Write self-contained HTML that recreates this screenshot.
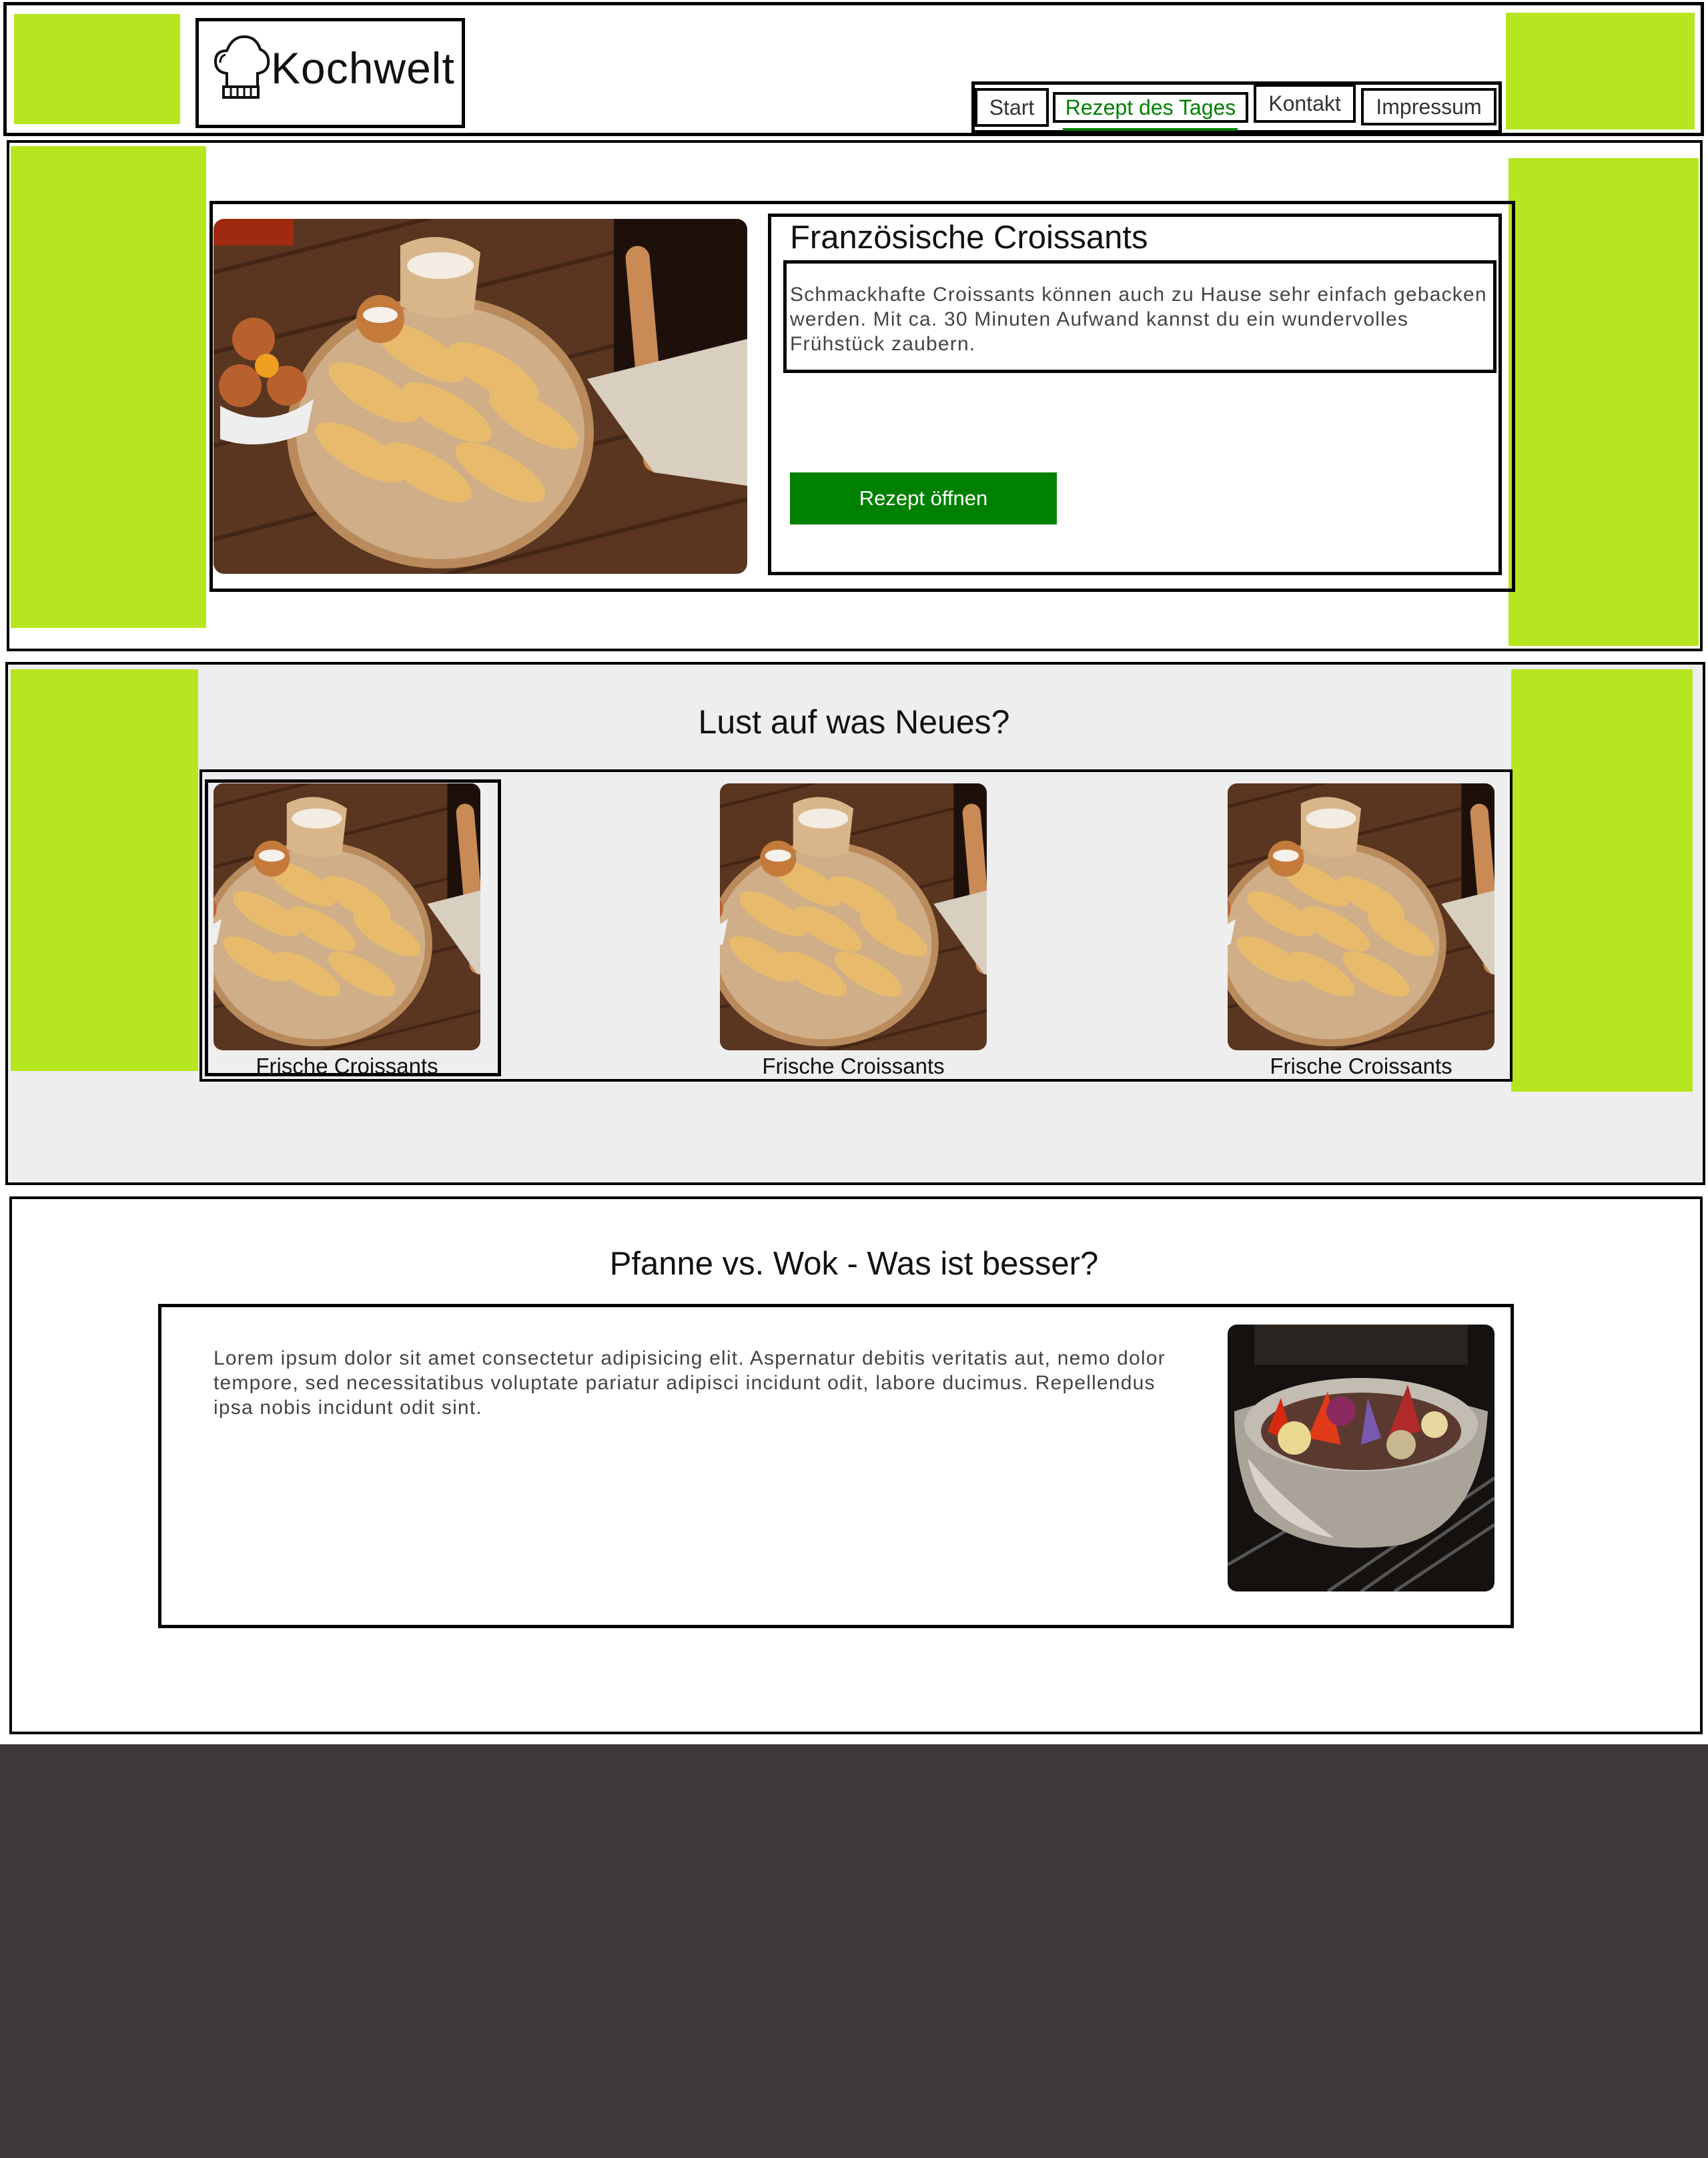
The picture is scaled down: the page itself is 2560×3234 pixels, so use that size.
<!DOCTYPE html>
<html><head><meta charset="utf-8">
<style>
*{margin:0;padding:0;box-sizing:border-box}
html,body{width:2560px;height:3234px;background:#fff;overflow:hidden}
body{position:relative;font-family:"Liberation Sans",sans-serif;color:#333}
.a{position:absolute}
.b{border:4px solid #000}
.g{background:#b6e61f}
.nav{font-size:32px;color:#333;text-align:center;line-height:46px}
</style></head><body>
<svg width="0" height="0" style="position:absolute">
<defs>
<symbol id="cro" viewBox="0 0 400 266" preserveAspectRatio="xMidYMid slice">
<rect width="400" height="266" fill="#5a3520"/>
<g stroke="#3a2012" stroke-width="3" opacity=".7">
<line x1="0" y1="40" x2="400" y2="-60"/><line x1="0" y1="100" x2="400" y2="0"/><line x1="0" y1="170" x2="400" y2="70"/><line x1="0" y1="240" x2="400" y2="140"/><line x1="0" y1="310" x2="400" y2="210"/></g>
<rect x="300" y="0" width="100" height="120" fill="#1d100a"/>
<rect x="315" y="20" width="18" height="170" rx="9" fill="#c98a56" transform="rotate(-5 324 100)"/>
<path d="M280 120 L400 90 L400 200 L330 190Z" fill="#d8cfc0"/>
<ellipse cx="170" cy="160" rx="115" ry="102" fill="#b98b5c"/>
<ellipse cx="170" cy="160" rx="108" ry="95" fill="#cfae88"/>
<g fill="#e8bb6c">
<ellipse cx="110" cy="175" rx="38" ry="14" transform="rotate(30 110 175)"/>
<ellipse cx="160" cy="190" rx="38" ry="14" transform="rotate(30 160 190)"/>
<ellipse cx="215" cy="190" rx="38" ry="14" transform="rotate(30 215 190)"/>
<ellipse cx="120" cy="130" rx="38" ry="14" transform="rotate(30 120 130)"/>
<ellipse cx="175" cy="145" rx="38" ry="14" transform="rotate(30 175 145)"/>
<ellipse cx="240" cy="150" rx="38" ry="14" transform="rotate(30 240 150)"/>
<ellipse cx="155" cy="100" rx="38" ry="14" transform="rotate(30 155 100)"/>
<ellipse cx="210" cy="115" rx="38" ry="14" transform="rotate(30 210 115)"/>
</g>
<path d="M140 20 Q170 5 200 25 L195 70 Q165 80 140 65Z" fill="#d9b68a"/>
<ellipse cx="170" cy="35" rx="25" ry="10" fill="#f2ece2"/>
<circle cx="125" cy="75" r="18" fill="#c47a3a"/><ellipse cx="125" cy="72" rx="13" ry="6" fill="#f5f0ea"/>
<circle cx="30" cy="90" r="16" fill="#b8602e"/><circle cx="20" cy="125" r="16" fill="#b8602e"/><circle cx="55" cy="125" r="15" fill="#b8602e"/>
<path d="M5 140 Q40 160 75 135 L70 160 Q35 175 5 165Z" fill="#eee"/>
<circle cx="40" cy="110" r="9" fill="#f0a020"/>
<rect x="0" y="0" width="60" height="20" fill="#a02a10"/>
</symbol>
</defs></svg>

<!-- header -->
<div class="a b" style="left:5px;top:3px;width:2549px;height:201px;border-width:5px"></div>
<div class="a g" style="left:21px;top:21px;width:249px;height:165px"></div>
<div class="a g" style="left:2257px;top:19px;width:283px;height:175px"></div>
<div class="a b" style="left:293px;top:27px;width:404px;height:165px;border-width:5px"></div>
<svg class="a" style="left:318px;top:50px" width="90" height="104" viewBox="0 0 90 104">
<path d="M22 78 L22 60 Q5 58 5 42 Q5 26 22 26 Q30 5 48 5 Q66 5 72 24 Q86 30 84 46 Q82 58 68 60 L68 78" fill="none" stroke="#111" stroke-width="4"/>
<path d="M12 44 Q12 34 20 32" fill="none" stroke="#111" stroke-width="3"/>
<rect x="17" y="80" width="52" height="16" fill="none" stroke="#111" stroke-width="4"/>
<path d="M28 82V94M38 82V94M48 82V94M58 82V94" stroke="#111" stroke-width="3"/>
</svg>
<div class="a" style="left:406px;top:64px;font-size:66px;color:#111;line-height:76px;letter-spacing:1px">Kochwelt</div>

<div class="a b" style="left:1456px;top:122px;width:795px;height:78px;border-width:5px"></div>
<div class="a b nav" style="left:1461px;top:132px;width:111px;height:58px;line-height:50px">Start</div>
<div class="a b nav" style="left:1578px;top:138px;width:293px;height:46px;line-height:38px;color:#008000">Rezept des Tages</div>
<div class="a" style="left:1593px;top:192px;width:262px;height:4px;background:#008000"></div>
<div class="a b nav" style="left:1879px;top:126px;width:153px;height:58px;line-height:50px">Kontakt</div>
<div class="a b nav" style="left:2040px;top:132px;width:203px;height:56px;line-height:48px">Impressum</div>

<!-- hero -->
<div class="a b" style="left:10px;top:210px;width:2542px;height:766px"></div>
<div class="a g" style="left:16px;top:219px;width:293px;height:722px"></div>
<div class="a g" style="left:2261px;top:237px;width:285px;height:731px"></div>
<div class="a b" style="left:314px;top:301px;width:1957px;height:586px;border-width:5px"></div>
<svg class="a" style="left:320px;top:328px;border-radius:16px" width="800" height="532"><use href="#cro" width="800" height="532"/></svg>
<div class="a b" style="left:1151px;top:320px;width:1100px;height:542px;border-width:5px"></div>
<div class="a" style="left:1184px;top:324px;font-size:49px;color:#111;line-height:64px">Französische Croissants</div>
<div class="a b" style="left:1174px;top:390px;width:1069px;height:169px;border-width:5px"></div>
<div class="a" style="left:1184px;top:423px;width:1060px;font-size:30px;line-height:37px;color:#444;letter-spacing:1.2px">Schmackhafte Croissants können auch zu Hause sehr einfach gebacken werden. Mit ca. 30 Minuten Aufwand kannst du ein wundervolles Frühstück zaubern.</div>
<div class="a" style="left:1184px;top:708px;width:400px;height:78px;background:#008000;color:#fff;font-size:31px;line-height:78px;text-align:center">Rezept öffnen</div>

<!-- section 3 -->
<div class="a b" style="left:8px;top:992px;width:2548px;height:784px;background:#eee"></div>
<div class="a g" style="left:16px;top:1003px;width:281px;height:602px"></div>
<div class="a g" style="left:2265px;top:1003px;width:272px;height:633px"></div>
<div class="a" style="left:0;top:1050px;width:2560px;text-align:center;font-size:50px;color:#111;line-height:64px">Lust auf was Neues?</div>
<div class="a b" style="left:299px;top:1153px;width:1968px;height:468px"></div>
<div class="a b" style="left:307px;top:1168px;width:444px;height:445px;border-width:5px"></div>
<svg class="a" style="left:320px;top:1174px;border-radius:14px" width="400" height="400"><use href="#cro" width="400" height="400"/></svg>
<svg class="a" style="left:1079px;top:1174px;border-radius:14px" width="400" height="400"><use href="#cro" width="400" height="400"/></svg>
<svg class="a" style="left:1840px;top:1174px;border-radius:14px" width="400" height="400"><use href="#cro" width="400" height="400"/></svg>
<div class="a" style="left:320px;top:1578px;width:400px;text-align:center;font-size:33px;color:#111;line-height:40px">Frische Croissants</div>
<div class="a" style="left:1079px;top:1578px;width:400px;text-align:center;font-size:33px;color:#111;line-height:40px">Frische Croissants</div>
<div class="a" style="left:1840px;top:1578px;width:400px;text-align:center;font-size:33px;color:#111;line-height:40px">Frische Croissants</div>

<!-- section 4 -->
<div class="a b" style="left:14px;top:1793px;width:2538px;height:806px"></div>
<div class="a" style="left:0;top:1862px;width:2560px;text-align:center;font-size:49px;color:#111;line-height:64px">Pfanne vs. Wok - Was ist besser?</div>
<div class="a b" style="left:237px;top:1954px;width:2032px;height:486px;border-width:5px"></div>
<div class="a" style="left:320px;top:2017px;width:1460px;font-size:30px;line-height:37px;color:#444;letter-spacing:1.2px">Lorem ipsum dolor sit amet consectetur adipisicing elit. Aspernatur debitis veritatis aut, nemo dolor tempore, sed necessitatibus voluptate pariatur adipisci incidunt odit, labore ducimus. Repellendus ipsa nobis incidunt odit sint.</div>
<svg class="a" style="left:1840px;top:1985px;border-radius:14px" width="400" height="400" viewBox="0 0 400 400">
<rect width="400" height="400" fill="#14110f"/>
<rect x="40" y="0" width="320" height="60" fill="#2a2420"/>
<g stroke="#555" stroke-width="5"><line x1="200" y1="400" x2="400" y2="260"/><line x1="150" y1="400" x2="400" y2="230"/><line x1="250" y1="400" x2="400" y2="300"/><line x1="0" y1="360" x2="120" y2="290"/></g>
<path d="M10 130 Q190 70 390 130 Q380 300 260 330 Q120 350 40 280 Q10 220 10 130Z" fill="#a9a39a"/>
<path d="M30 200 Q50 300 160 320 Q80 260 30 200Z" fill="#d8d2c8"/>
<ellipse cx="200" cy="150" rx="175" ry="70" fill="#c2bcb2"/>
<ellipse cx="200" cy="160" rx="150" ry="58" fill="#5a3a30"/>
<path d="M60 160 L80 110 L100 180Z" fill="#d62a10"/><path d="M120 170 L150 100 L170 180Z" fill="#e03a18"/>
<circle cx="100" cy="170" r="25" fill="#e8d890"/><circle cx="170" cy="130" r="22" fill="#8a2a60"/>
<path d="M240 170 L270 90 L290 160Z" fill="#b02a2a"/><circle cx="260" cy="180" r="22" fill="#c8b890"/>
<circle cx="310" cy="150" r="20" fill="#e8d8a0"/><path d="M200 180 L210 110 L230 170Z" fill="#7a5ab0"/>
</svg>

<!-- footer -->
<div class="a" style="left:0;top:2614px;width:2560px;height:620px;background:#3e3a3a"></div>
</body></html>
